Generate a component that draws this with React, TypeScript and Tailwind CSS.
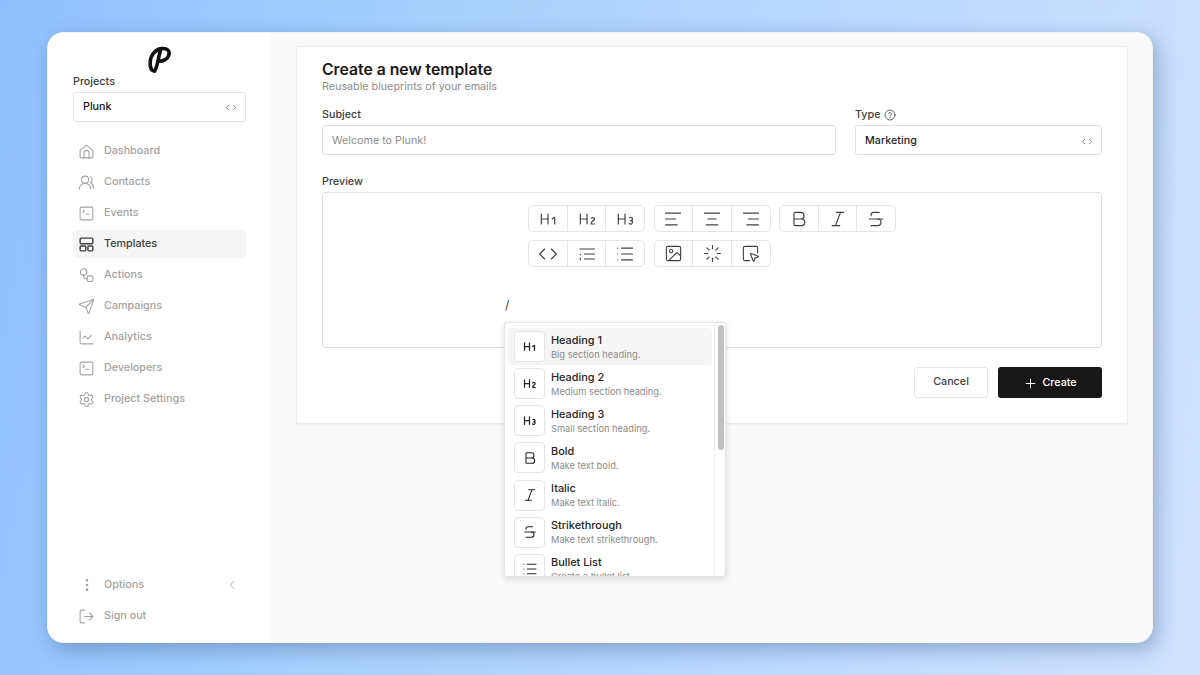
import {
  AlignCenter,
  AlignLeft,
  AlignRight,
  Bold,
  ChartLine,
  ChevronLeft,
  ChevronRight,
  CircleHelp,
  Code,
  EllipsisVertical,
  Heading1,
  Heading2,
  Heading3,
  Image,
  Italic,
  List,
  Loader,
  LogOut,
  Plus,
  Send,
  Settings,
  SquareMousePointer,
  SquareTerminal,
  Strikethrough,
  UsersRound,
} from "lucide-react";
import type { ReactNode } from "react";

const HomeIcon = () => (
  <svg width="17" height="17" viewBox="0 0 24 24" fill="none" stroke="currentColor" strokeWidth="1.6" strokeLinejoin="round" strokeLinecap="round">
    <path d="M3 10.5 12 3l9 7.5V19a2 2 0 0 1-2 2H5a2 2 0 0 1-2-2z" />
    <path d="M8.500 21v-7a3.500 3.500 0 0 1 7 0v7" />
  </svg>
);

const TemplatesIcon = () => (
  <svg width="17" height="17" viewBox="0 0 24 24" fill="none" stroke="currentColor" strokeWidth="2" strokeLinejoin="round">
    <rect x="3" y="3" width="18" height="8" rx="1.5" />
    <rect x="3" y="14" width="8" height="7" rx="1.5" />
    <rect x="14" y="14" width="7" height="7" rx="1.5" />
  </svg>
);

const ActionsIcon = () => (
  <svg width="17" height="17" viewBox="0 0 24 24" fill="none" stroke="currentColor" strokeWidth="1.6" strokeLinejoin="round">
    <circle cx="8" cy="7" r="4.500" />
    <path d="M8 11.500v3a2 2 0 0 0 2 2h3" />
    <rect x="13" y="12.500" width="8" height="8" rx="2" />
  </svg>
);

const OrderedIcon = () => (
  <svg width="20" height="20" viewBox="0 0 24 24" fill="none" stroke="currentColor" strokeWidth="1.4" strokeLinecap="round">
    <path d="M3.500 6h17.500M9 12h12M9 18h12M4 12.500v.5M4 17v2" />
  </svg>
);

const LogoIcon = () => (
  <svg width="24" height="28" viewBox="0 0 24 28" fill="none" stroke="#111111" strokeWidth="3.600" strokeLinecap="round" strokeLinejoin="round">
    <path d="M6.500 25C3 25 2 21 2.200 16 2.600 8.500 7.500 3.500 13.500 2.600 19.500 1.800 22 5 20.800 9.200 19.600 13.400 14.500 15.500 10.500 15.200" />
    <path d="M6.500 25C9 23 10 13 12.500 4" />
  </svg>
);

const UpDown = () => (
  <span className="flex text-[#666666]">
    <ChevronLeft size={9} strokeWidth={2.2} className="-mr-[1px]" />
    <ChevronRight size={9} strokeWidth={2.2} className="-ml-[1px]" />
  </span>
);

const navItems: { label: string; icon: ReactNode; active?: boolean }[] = [
  { label: "Dashboard", icon: <HomeIcon /> },
  { label: "Contacts", icon: <UsersRound size={17} strokeWidth={1.5} /> },
  { label: "Events", icon: <SquareTerminal size={17} strokeWidth={1.5} /> },
  { label: "Templates", icon: <TemplatesIcon />, active: true },
  { label: "Actions", icon: <ActionsIcon /> },
  { label: "Campaigns", icon: <Send size={17} strokeWidth={1.5} /> },
  { label: "Analytics", icon: <ChartLine size={17} strokeWidth={1.5} /> },
  { label: "Developers", icon: <SquareTerminal size={17} strokeWidth={1.5} /> },
  { label: "Project Settings", icon: <Settings size={17} strokeWidth={1.5} /> },
];

const toolbarRows: ReactNode[][][] = [
  [
    [
      <Heading1 key="h1" size={20} strokeWidth={1.4} />,
      <Heading2 key="h2" size={20} strokeWidth={1.4} />,
      <Heading3 key="h3" size={20} strokeWidth={1.4} />,
    ],
    [
      <AlignLeft key="l" size={20} strokeWidth={1.4} />,
      <AlignCenter key="c" size={20} strokeWidth={1.4} />,
      <AlignRight key="r" size={20} strokeWidth={1.4} />,
    ],
    [
      <Bold key="b" size={20} strokeWidth={1.4} />,
      <Italic key="i" size={20} strokeWidth={1.4} />,
      <Strikethrough key="s" size={20} strokeWidth={1.4} />,
    ],
  ],
  [
    [
      <Code key="code" size={20} strokeWidth={1.4} />,
      <OrderedIcon key="ol" />,
      <List key="ul" size={20} strokeWidth={1.4} />,
    ],
    [
      <Image key="img" size={19} strokeWidth={1.4} />,
      <Loader key="load" size={19} strokeWidth={1.4} />,
      <SquareMousePointer key="btn" size={19} strokeWidth={1.4} />,
    ],
  ],
];

const slashItems: { title: string; desc: string; icon: ReactNode }[] = [
  { title: "Heading 1", desc: "Big section heading.", icon: <Heading1 size={15} strokeWidth={2} /> },
  { title: "Heading 2", desc: "Medium section heading.", icon: <Heading2 size={15} strokeWidth={2} /> },
  { title: "Heading 3", desc: "Small section heading.", icon: <Heading3 size={15} strokeWidth={2} /> },
  { title: "Bold", desc: "Make text bold.", icon: <Bold size={16} strokeWidth={1.6} /> },
  { title: "Italic", desc: "Make text italic.", icon: <Italic size={16} strokeWidth={1.6} /> },
  { title: "Strikethrough", desc: "Make text strikethrough.", icon: <Strikethrough size={16} strokeWidth={1.6} /> },
  { title: "Bullet List", desc: "Create a bullet list.", icon: <List size={16} strokeWidth={1.6} /> },
];

const Sidebar = () => (
  <aside className="flex w-[223px] shrink-0 flex-col bg-white pb-[12px] pl-[25px] pr-[25px] pt-[13px]">
    <div className="flex h-[27px] justify-center">
      <LogoIcon />
    </div>
    <p className="mt-[1px] text-[10.75px] font-medium leading-[16px] text-[#404040]">Projects</p>
    <div className="mt-[2px] flex h-[30px] items-center justify-between rounded-[3px] border border-[#e5e5e5] pl-[9px] pr-[6px] text-[10.75px] font-medium text-[#171717]">
      Plunk
      <UpDown />
    </div>
    <nav className="mt-[15px] flex flex-col gap-[3px]">
      {navItems.map((item) => (
        <div
          key={item.label}
          className={
            item.active
              ? "flex h-[28px] items-center gap-[9px] rounded-[4px] bg-[#f5f5f5] pl-[5px] text-[10.75px] font-medium text-[#404040]"
              : "flex h-[28px] items-center gap-[9px] rounded-[4px] pl-[5px] text-[10.75px] font-medium text-[#a3a3a3]"
          }
        >
          <span className="flex w-[17px] justify-center">{item.icon}</span>
          {item.label}
        </div>
      ))}
    </nav>
    <div className="mt-auto flex flex-col gap-[3px]">
      <div className="flex h-[28px] items-center gap-[9px] pl-[5px] pr-[7px] text-[10.75px] font-medium text-[#a3a3a3]">
        <span className="flex w-[17px] justify-center">
          <EllipsisVertical size={16} strokeWidth={2} />
        </span>
        Options
        <ChevronLeft size={14} strokeWidth={1.5} className="ml-auto" />
      </div>
      <div className="flex h-[28px] items-center gap-[9px] pl-[5px] text-[10.75px] font-medium text-[#a3a3a3]">
        <span className="flex w-[17px] justify-center">
          <LogOut size={17} strokeWidth={1.5} />
        </span>
        Sign out
      </div>
    </div>
  </aside>
);

const SlashMenu = () => (
  <div className="absolute left-[207px] top-[275px] flex h-[255px] w-[222px] overflow-hidden rounded-[3px] border border-[#e5e5e5] bg-white shadow-[0_2px_6px_rgba(0,0,0,0.14)]">
    <div className="flex min-w-0 flex-1 flex-col pl-[3px] pr-[2px] pt-[5px]">
      {slashItems.map((item, i) => (
        <div
          key={item.title}
          className={
            i === 0
              ? "flex h-[37.15px] shrink-0 items-center gap-[6px] rounded-[4px] bg-[#f5f5f5] px-[6px]"
              : "flex h-[37.15px] shrink-0 items-center gap-[6px] rounded-[4px] px-[6px]"
          }
        >
          <span className="flex h-[31px] w-[31px] shrink-0 items-center justify-center rounded-[4px] border border-[#e5e5e5] bg-white text-[#262626]">
            {item.icon}
          </span>
          <div>
            <p className="text-[10.9px] font-medium leading-[15px] text-[#262626]">{item.title}</p>
            <p className="text-[9.3px] leading-[13px] text-[#8c8c8c]">{item.desc}</p>
          </div>
        </div>
      ))}
    </div>
    <div className="w-[11px] shrink-0 border-l border-[#ededed] pl-[3px] pr-[1px] pt-[2px]">
      <div className="h-[125px] rounded-full bg-[#c1c1c1]" />
    </div>
  </div>
);

const Editor = () => (
  <div className="relative">
    <p className="mt-[19px] text-[10.75px] font-medium leading-[16px] text-[#404040]">Preview</p>
    <div className="mt-[2px] flex h-[156px] flex-col gap-[8px] rounded-[3px] border border-[#e0e0e0] pl-[205px] pt-[12px]">
      {toolbarRows.map((groups, r) => (
        <div key={r} className="flex gap-[8.5px]">
          {groups.map((buttons, g) => (
            <div key={g} className="flex h-[27px] w-[117px] divide-x divide-[#e5e5e5] rounded-[5px] border border-[#e5e5e5] text-[#404040]">
              {buttons.map((icon, b) => (
                <span key={b} className="flex flex-1 items-center justify-center">
                  {icon}
                </span>
              ))}
            </div>
          ))}
        </div>
      ))}
      <p className="-ml-[23px] pt-[22px] text-[12px] leading-[16px] text-[#404040]">/</p>
    </div>
  </div>
);

const TemplateCard = () => (
  <section className="relative h-[378px] rounded-[3px] border border-[#ececec] bg-white px-[25px] pt-[13px] shadow-[0_1px_2px_rgba(0,0,0,0.05)]">
    <h1 className="text-[15.75px] font-semibold leading-[19px] text-[#171717]">Create a new template</h1>
    <p className="text-[10.75px] leading-[16px] text-[#8c8c8c]">Reusable blueprints of your emails</p>
    <div className="mt-[12px] flex gap-[19px]">
      <div className="w-[514px]">
        <p className="text-[10.75px] font-medium leading-[16px] text-[#404040]">Subject</p>
        <div className="mt-[2px] flex h-[30px] items-center rounded-[3px] border border-[#e0e0e0] pl-[9px] pt-[2px] text-[10.75px] text-[#8c8c8c]">
          Welcome to Plunk!
        </div>
      </div>
      <div className="flex-1">
        <p className="flex items-center gap-[3px] text-[10.75px] font-medium leading-[16px] text-[#404040]">
          Type <CircleHelp size={12} strokeWidth={1.6} />
        </p>
        <div className="mt-[2px] flex h-[30px] items-center justify-between rounded-[3px] border border-[#e0e0e0] pl-[9px] pr-[6px] pt-[2px] text-[10.75px] font-medium text-[#262626]">
          Marketing
          <UpDown />
        </div>
      </div>
    </div>
    <Editor />
    <SlashMenu />
    <div className="mt-[19px] flex justify-end gap-[10px]">
      <button className="h-[31px] w-[74px] rounded-[3px] border border-[#e5e5e5] text-[10.75px] font-medium text-[#404040]">
        Cancel
      </button>
      <button className="flex h-[31px] w-[104px] items-center justify-center gap-[4px] rounded-[3px] bg-[#171717] pt-[1px] text-[10.75px] font-medium text-white">
        <Plus size={15} strokeWidth={1.6} />
        Create
      </button>
    </div>
  </section>
);

export default function App() {
  return (
    <div className="h-[675px] w-[1200px] overflow-hidden bg-[linear-gradient(100deg,#8fc1ff_0%,#a9d0ff_35%,#cfe3ff_100%)] pl-[47px] pt-[32px] font-['Inter',sans-serif]">
      <div className="flex h-[611px] w-[1106px] overflow-hidden rounded-[16px] border border-[#f3f3f3] bg-[#fafafa] shadow-[4px_6px_20px_rgba(50,80,120,0.4)]">
        <Sidebar />
        <main className="flex-1 pl-[25px] pr-[24px] pt-[13px]">
          <TemplateCard />
        </main>
      </div>
    </div>
  );
}
